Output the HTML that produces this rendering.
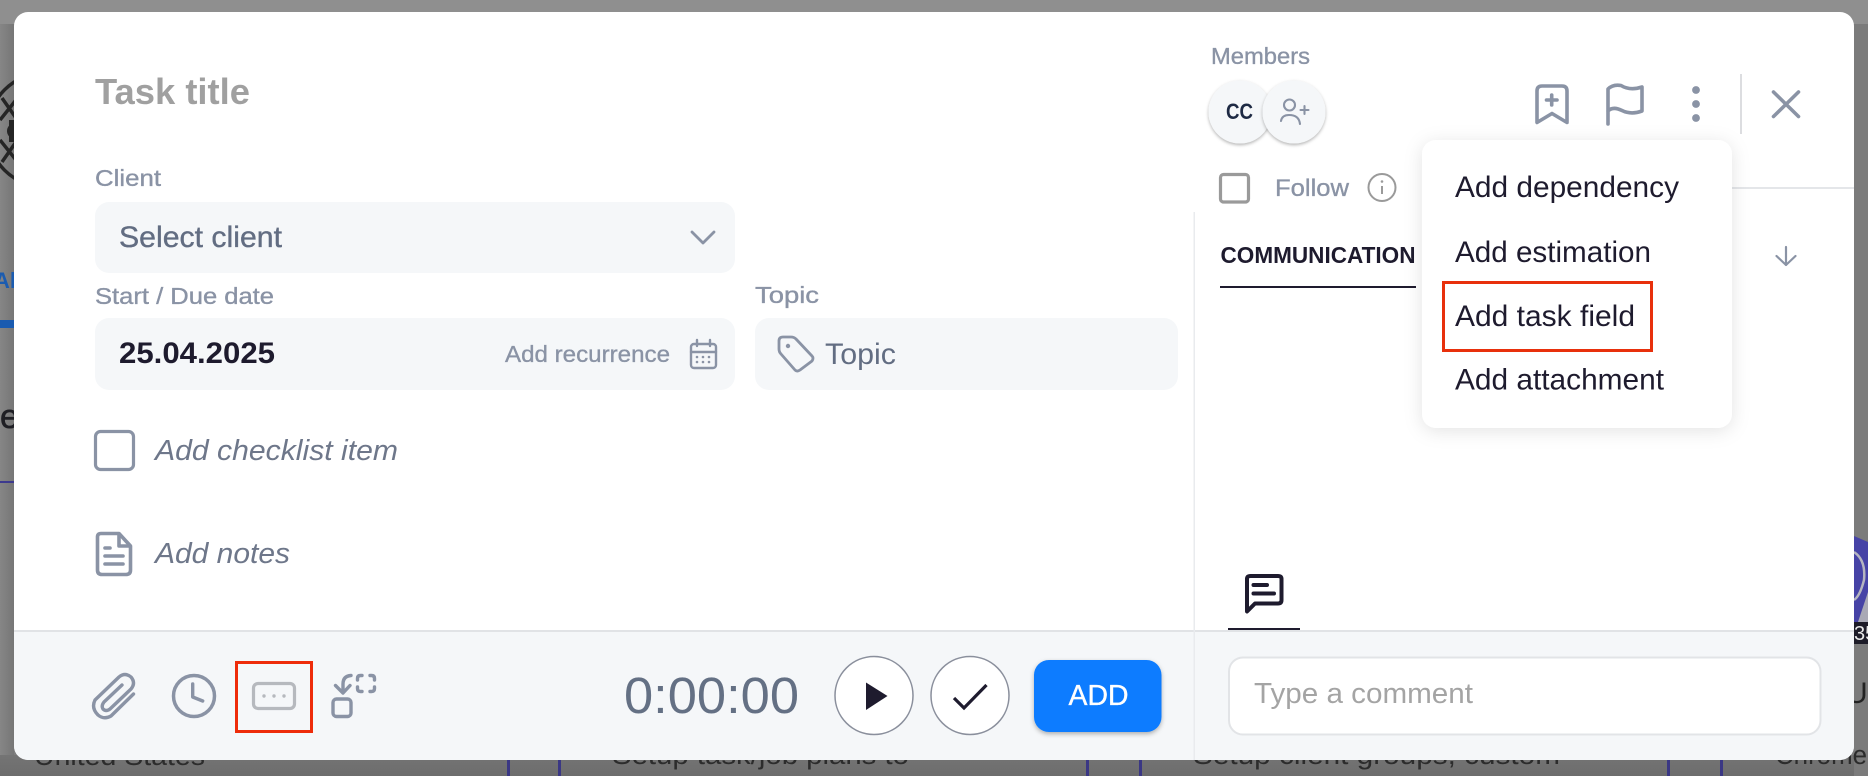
<!DOCTYPE html>
<html lang="en">
<head>
<meta charset="utf-8">
<title>Task</title>
<style>
html,body{margin:0;padding:0;width:1868px;height:776px;overflow:hidden;background:#7d7d7d}
svg{position:absolute;left:0;top:0;display:block}
text{font-family:"Liberation Sans",sans-serif}
.m{stroke-width:.35px}
.lbl{font-size:23px;fill:#8a93a5;stroke:#8a93a5}
.it{font-size:29px;font-style:italic;fill:#6e778a}
.menu{font-size:30px;fill:#1e1b2e}
.ic{fill:none;stroke:#8a93a5;stroke-linecap:round;stroke-linejoin:round}
</style>
</head>
<body>
<svg width="1868" height="776" viewBox="0 0 1868 776" xmlns="http://www.w3.org/2000/svg">
<defs>
<linearGradient id="lf" x1="0" x2="1" y1="0" y2="0"><stop offset="0" stop-color="#868686"/><stop offset="1" stop-color="#767676"/></linearGradient>
<linearGradient id="bt" x1="0" x2="0" y1="0" y2="1"><stop offset="0" stop-color="#747474"/><stop offset="1" stop-color="#6d6d6d"/></linearGradient>
<filter id="dd" x="-20%" y="-20%" width="140%" height="140%"><feDropShadow dx="0" dy="3" stdDeviation="9" flood-color="#000" flood-opacity=".11"/></filter>
<filter id="av" x="-20%" y="-20%" width="140%" height="140%"><feDropShadow dx="0" dy="1.5" stdDeviation="1.5" flood-color="#000" flood-opacity=".3"/></filter>
<filter id="bs" x="-20%" y="-20%" width="140%" height="150%"><feDropShadow dx="0" dy="2" stdDeviation="2.5" flood-color="#000" flood-opacity=".3"/></filter>
<clipPath id="mc"><path d="M0 0H1868V776H0ZM28 12A14 14 0 0 0 14 26V746A14 14 0 0 0 28 760H1840A14 14 0 0 0 1854 746V26A14 14 0 0 0 1840 12Z" clip-rule="evenodd"/></clipPath>
</defs>

<!-- dimmed backdrop -->
<rect width="1868" height="776" fill="#7e7e7e"/>
<rect x="0" y="24" width="14" height="752" fill="url(#lf)"/>
<rect x="0" y="0" width="1868" height="24" fill="#8f8f8f"/>
<rect x="0" y="755" width="1868" height="21" fill="url(#bt)"/>
<rect x="1854" y="24" width="14" height="752" fill="#7b7b7b"/>
<g clip-path="url(#mc)">
  <g fill="none" stroke="#252525" stroke-width="3.500">
    <circle cx="45" cy="130" r="57"/>
    <path d="M2 98L16 118M16 100L0 120M2 162L16 142M16 160L0 140"/>
  </g>
  <circle cx="15" cy="131" r="8" fill="#252525"/>
  <path d="M9 120H14V142H9Z" fill="#252525"/>
  <text x="-6" y="288" font-size="22" font-weight="700" fill="#1c5cb0">Ak</text>
  <rect x="0" y="320" width="14" height="8" fill="#1a5bb0"/>
  <text x="0" y="428" font-size="34" fill="#1f1f24" stroke="#1f1f24" stroke-width=".6">e</text>
  <rect x="0" y="481" width="14" height="2" fill="#3d3a8e"/>
  <text x="34" y="765" font-size="27" fill="#2c2c2c" textLength="171" lengthAdjust="spacingAndGlyphs">United States</text>
  <text x="612" y="764" font-size="27" fill="#2c2c2c" textLength="297" lengthAdjust="spacingAndGlyphs">Setup task/job plans to</text>
  <text x="1193" y="764" font-size="27" fill="#2c2c2c" textLength="367" lengthAdjust="spacingAndGlyphs">Setup client groups, custom</text>
  <text x="1775" y="764" font-size="27" fill="#2c2c2c" textLength="92" lengthAdjust="spacingAndGlyphs">Chrome</text>
  <g fill="#3a3784">
    <rect x="507" y="755" width="3" height="21"/><rect x="558" y="755" width="3" height="21"/>
    <rect x="1086" y="755" width="3" height="21"/><rect x="1139" y="755" width="3" height="21"/>
    <rect x="1667" y="755" width="3" height="21"/><rect x="1720" y="755" width="3" height="21"/>
  </g>
  <path d="M1854 536L1868 542V622H1854Z" fill="#4643a6"/>
  <path d="M1854 552Q1866 560 1864 580Q1860 596 1854 600" fill="none" stroke="#b5b5c0" stroke-width="2.500"/>
  <path d="M1858 622L1868 592V622Z" fill="#a9a9b5"/>
  <rect x="1854" y="622" width="14" height="22" fill="#1d1c28"/>
  <text x="1854" y="640" font-size="20" fill="#e8e8e8">35</text>
  <text x="1846" y="703" font-size="30" fill="#232323">U</text>
</g>

<!-- modal -->
<rect x="14" y="12" width="1840" height="748" rx="14" fill="#fff"/>
<path d="M14 631H1854V746A14 14 0 0 1 1840 760H28A14 14 0 0 1 14 746Z" fill="#f5f7f9"/>
<rect x="14" y="630" width="1840" height="2" fill="#e1e3e6"/>
<rect x="1193.500" y="212" width="1.500" height="548" fill="#e9ebee"/>
<rect x="1732" y="187" width="122" height="2" fill="#e4e6e9"/>

<!-- left column -->
<text x="95" y="104" font-size="36" font-weight="700" fill="#a0a0a0" textLength="155" lengthAdjust="spacingAndGlyphs">Task title</text>
<text x="95" y="186" class="lbl m" textLength="66" lengthAdjust="spacingAndGlyphs">Client</text>
<rect x="95" y="202" width="640" height="71" rx="14" fill="#f5f7f9"/>
<text x="119" y="247" font-size="29.500" class="m" fill="#626d82" stroke="#626d82" textLength="163" lengthAdjust="spacingAndGlyphs">Select client</text>
<path class="ic" stroke-width="2.800" d="M692 232L703 243L714 232"/>

<text x="95" y="304" class="lbl m" textLength="179" lengthAdjust="spacingAndGlyphs">Start / Due date</text>
<rect x="95" y="318" width="640" height="72" rx="14" fill="#f5f7f9"/>
<text x="119" y="363" font-size="29.500" font-weight="700" fill="#1e1b2e" textLength="156" lengthAdjust="spacingAndGlyphs">25.04.2025</text>
<text x="505" y="362" class="lbl m" textLength="165" lengthAdjust="spacingAndGlyphs">Add recurrence</text>
<g class="ic" stroke-width="2.400">
  <rect x="691" y="344" width="25" height="24" rx="3"/>
  <path d="M691 352H716M697 340V346M710 340V346"/>
</g>
<g fill="#8a93a5"><circle cx="697" cy="357" r="1.300"/><circle cx="703" cy="357" r="1.300"/><circle cx="709" cy="357" r="1.300"/><circle cx="697" cy="362" r="1.300"/><circle cx="703" cy="362" r="1.300"/><circle cx="709" cy="362" r="1.300"/></g>

<text x="755" y="303" class="lbl m" textLength="64" lengthAdjust="spacingAndGlyphs">Topic</text>
<rect x="755" y="318" width="423" height="72" rx="14" fill="#f5f7f9"/>
<path class="ic" stroke-width="2.800" d="M779 341Q779 337 783 337H791Q794 337 796 339L812 356Q814 358 812 361L800 370Q797 372 795 370L781 354Q779 352 779 349Z"/>
<circle cx="788" cy="346" r="2.200" fill="#8a93a5"/>
<text x="825" y="364" font-size="30" fill="#626d82" textLength="71" lengthAdjust="spacingAndGlyphs">Topic</text>

<rect x="95.500" y="431.500" width="38" height="38" rx="5" fill="none" stroke="#8a93a5" stroke-width="3.200"/>
<text x="155" y="460" class="it" textLength="243" lengthAdjust="spacingAndGlyphs">Add checklist item</text>
<g class="ic" stroke-width="3.600">
  <path d="M101 533.500H119L130.500 546V570Q130.500 574.500 126 574.500H102Q97.500 574.500 97.500 570V537Q97.500 533.500 101 533.500Z"/>
  <path d="M119 534.500V546H129.500M105 548H110M105 556H123M105 564H123"/>
</g>
<text x="155" y="563" class="it" textLength="135" lengthAdjust="spacingAndGlyphs">Add notes</text>

<!-- footer icons -->
<g class="ic" stroke-width="3.400">
  <path d="M133.500 694L111 716Q104 720 98 715Q91 708 95 700L119 677Q125 672 131 677Q136 683 131 689L110 709Q106 712 103 709Q101 706 104 702L122 685"/>
</g>
<circle cx="194" cy="696" r="20.500" fill="none" stroke="#8a93a5" stroke-width="3.500"/>
<path class="ic" stroke-width="3.400" d="M192.700 684V697L202.700 701"/>
<rect x="236.500" y="662.500" width="75" height="69" fill="none" stroke="#ee2c0a" stroke-width="3"/>
<rect x="253.500" y="683.500" width="41" height="25" rx="4.500" fill="none" stroke="#b6b9be" stroke-width="3.200"/>
<g fill="#b6b9be"><circle cx="264" cy="696" r="1.700"/><circle cx="274" cy="696" r="1.700"/><circle cx="284" cy="696" r="1.700"/></g>
<g class="ic" stroke-width="3.400">
  <rect x="333" y="699" width="18" height="17.500" rx="3.500"/>
  <path d="M351 675.500Q343 676 343 684V692M335.500 685.500L343 693L350 685.500"/>
  <path d="M362 675.500H360.500Q357.500 675.500 357.500 678.500V680M370 675.500H371.500Q374.500 675.500 374.500 678.500V680M362 691.500H360.500Q357.500 691.500 357.500 688.500V687M370 691.500H371.500Q374.500 691.500 374.500 688.500V687"/>
</g>

<!-- timer + actions -->
<text x="624" y="713" font-size="51" fill="#647084" textLength="175" lengthAdjust="spacingAndGlyphs">0:00:00</text>
<circle cx="874" cy="695.500" r="39" fill="#fff" stroke="#8a8f9c" stroke-width="1.500"/>
<path d="M866 682.500L887.500 696L866 710Z" fill="#1e1b2e"/>
<circle cx="970" cy="695.500" r="39" fill="#fff" stroke="#8a8f9c" stroke-width="1.500"/>
<path d="M954 698L964 708L986.500 685" fill="none" stroke="#1e1b2e" stroke-width="3.200"/>
<rect x="1034" y="660" width="127.500" height="72" rx="15" fill="#0a7cff" filter="url(#bs)"/>
<text x="1068.500" y="705" font-size="28.500" class="m" fill="#fff" stroke="#fff" textLength="60" lengthAdjust="spacingAndGlyphs">ADD</text>

<!-- right column header -->
<text x="1211" y="64" class="lbl m" textLength="99" lengthAdjust="spacingAndGlyphs">Members</text>
<circle cx="1240" cy="112" r="31.500" fill="#f5f7f9" filter="url(#av)"/>
<text x="1226" y="119" font-size="22" font-weight="700" fill="#1e2a44" textLength="27" lengthAdjust="spacingAndGlyphs">CC</text>
<circle cx="1294" cy="112" r="31.500" fill="#f5f7f9" filter="url(#av)"/>
<g class="ic" stroke-width="2.100">
  <circle cx="1289.500" cy="105" r="5.500"/>
  <path d="M1281 121Q1282 115 1289 115Q1299 115 1300 124M1304.500 106V114M1300.500 110H1308.500"/>
</g>

<path class="ic" stroke-width="3.600" d="M1537 122.500V91Q1537 86 1542 86H1562Q1567 86 1567 91V122.500L1552 113.500Z"/>
<path class="ic" stroke-width="3.600" d="M1546.500 100H1557M1551.700 95V105"/>
<path class="ic" stroke-width="3.600" d="M1608 124V89Q1613 84 1621 85.500Q1630 91 1642 87V111Q1631 115 1622 110.500Q1613 106 1608 111"/>
<g fill="#8a93a5"><circle cx="1696" cy="90" r="3.900"/><circle cx="1696" cy="104" r="3.900"/><circle cx="1696" cy="118" r="3.900"/></g>
<rect x="1740" y="74" width="2" height="60" fill="#dcdde0"/>
<path class="ic" stroke-width="3.600" d="M1773.500 92L1798.500 116.500M1798.500 92L1773.500 116.500"/>

<rect x="1220.500" y="174.500" width="28" height="27.500" rx="3" fill="none" stroke="#9a9a9a" stroke-width="3.200"/>
<text x="1275" y="196" font-size="24" class="m" fill="#8a93a5" stroke="#8a93a5" stroke-width=".6" textLength="74" lengthAdjust="spacingAndGlyphs">Follow</text>
<circle cx="1382" cy="187.500" r="13.500" fill="none" stroke="#9a9a9a" stroke-width="2"/>
<path d="M1382 186V194" stroke="#9a9a9a" stroke-width="2"/>
<circle cx="1382" cy="181.500" r="1.300" fill="#9a9a9a"/>

<text x="1220.500" y="263" font-size="23" font-weight="700" fill="#1e1b2e" textLength="195" lengthAdjust="spacingAndGlyphs">COMMUNICATION</text>
<rect x="1220" y="286" width="196" height="2" fill="#1e1b2e"/>
<path class="ic" stroke-width="2.200" d="M1786 247V265M1776.500 256L1786 265L1795.500 256"/>

<!-- dropdown -->
<rect x="1422" y="140" width="310" height="288" rx="14" fill="#fff" filter="url(#dd)"/>
<text x="1455" y="197" class="menu" textLength="224" lengthAdjust="spacingAndGlyphs">Add dependency</text>
<text x="1455" y="262" class="menu" textLength="196" lengthAdjust="spacingAndGlyphs">Add estimation</text>
<text x="1455" y="326" class="menu" textLength="180" lengthAdjust="spacingAndGlyphs">Add task field</text>
<text x="1455" y="389.500" class="menu" textLength="209" lengthAdjust="spacingAndGlyphs">Add attachment</text>
<rect x="1443.500" y="282.500" width="208" height="68" fill="none" stroke="#e8300c" stroke-width="3"/>

<!-- comment -->
<g fill="none" stroke="#1e1b2e" stroke-linecap="round" stroke-linejoin="round">
  <path stroke-width="4" d="M1247 611.500V579Q1247 576 1250.500 576H1278Q1281.500 576 1281.500 579V600Q1281.500 603.500 1278 603.500H1255Z"/>
  <path stroke-width="4" d="M1253.500 585H1267M1253.500 593.500H1274"/>
</g>
<rect x="1228" y="628" width="72" height="2" fill="#1e1b2e"/>
<rect x="1229" y="657.500" width="591.500" height="77" rx="14" fill="#fff" stroke="#e2e4e7" stroke-width="2"/>
<text x="1254" y="703" font-size="29" fill="#a4a4a4" textLength="219" lengthAdjust="spacingAndGlyphs">Type a comment</text>
</svg>
</body>
</html>
